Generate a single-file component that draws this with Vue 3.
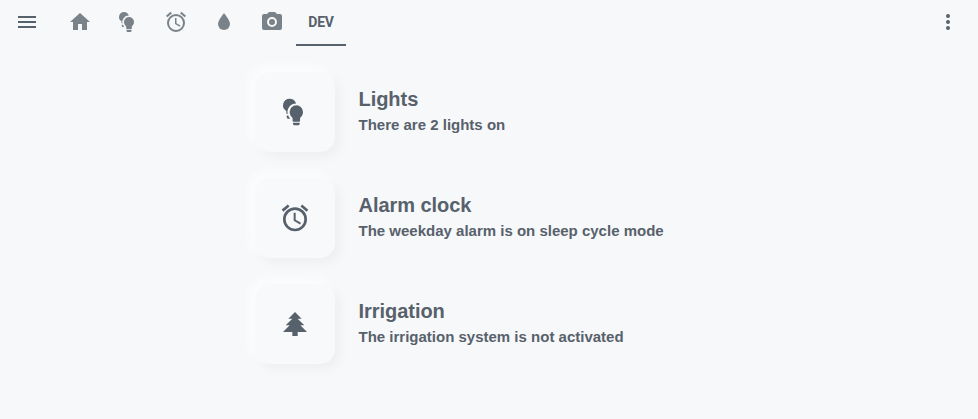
<script setup>
const icons = {
  menu: 'M3,6H21V8H3V6M3,11H21V13H3V11M3,16H21V18H3V16Z',
  home: 'M10,20V14H14V20H19V12H22L12,3L2,12H5V20H10Z',
  bulbs: 'M8,2A5,5 0 0,1 12.8,5.6A6.5,6.5 0 0,0 6.5,13.5H6.2A.7,.7 0 0,1 5.5,12.8V11.3A5,5 0 0,1 8,2M5.8,14.7H6.9Q7.4,15.8 8.2,16.7V17H6.8A1,1 0 0,1 5.8,16V14.7M13,7A5,5 0 0,1 18,12C18,14 17,15.4 15.8,16.5V18.5A.8,.8 0 0,1 15,19.3H11A.8,.8 0 0,1 10.2,18.5V16.5C9,15.4 8,14 8,12A5,5 0 0,1 13,7M10.5,20H15.5V20.8A1.2,1.2 0 0,1 14.3,22H11.7A1.2,1.2 0 0,1 10.5,20.8V20Z',
  alarm: 'M12,20A7,7 0 0,1 5,13A7,7 0 0,1 12,6A7,7 0 0,1 19,13A7,7 0 0,1 12,20M12,4A9,9 0 0,0 3,13A9,9 0 0,0 12,22A9,9 0 0,0 21,13A9,9 0 0,0 12,4M12.5,8H11V14L15.75,16.85L16.5,15.62L12.5,13.25V8M7.88,3.39L6.6,1.86L2,5.71L3.29,7.24L7.88,3.39M22,5.72L17.4,1.86L16.11,3.39L20.71,7.25L22,5.72Z',
  water: 'M12,20A6,6 0 0,1 6,14C6,10 12,3.25 12,3.25C12,3.25 18,10 18,14A6,6 0 0,1 12,20Z',
  camera: 'M4,4H7L9,2H15L17,4H20A2,2 0 0,1 22,6V18A2,2 0 0,1 20,20H4A2,2 0 0,1 2,18V6A2,2 0 0,1 4,4M12,7A5,5 0 0,0 7,12A5,5 0 0,0 12,17A5,5 0 0,0 17,12A5,5 0 0,0 12,7M12,9A3,3 0 0,1 15,12A3,3 0 0,1 12,15A3,3 0 0,1 9,12A3,3 0 0,1 12,9Z',
  dots: 'M12,16A2,2 0 0,1 14,18A2,2 0 0,1 12,20A2,2 0 0,1 10,18A2,2 0 0,1 12,16M12,10A2,2 0 0,1 14,12A2,2 0 0,1 12,14A2,2 0 0,1 10,12A2,2 0 0,1 12,10M12,4A2,2 0 0,1 14,6A2,2 0 0,1 12,8A2,2 0 0,1 10,6A2,2 0 0,1 12,4Z',
  tree: 'M10,21V18H3L8,13H5L10,8H7L12,3L17,8H14L19,13H16L21,18H14V21H10Z'
}
const tabs = ['home', 'bulbs', 'alarm', 'water', 'camera']
const rows = [
  { icon: 'bulbs', title: 'Lights', text: 'There are 2 lights on' },
  { icon: 'alarm', title: 'Alarm clock', text: 'The weekday alarm is on sleep cycle mode' },
  { icon: 'tree', title: 'Irrigation', text: 'The irrigation system is not activated' }
]
</script>

<template>
  <div class="page">
    <header class="bar">
      <svg class="icon" viewBox="0 0 24 24"><path :d="icons.menu" /></svg>
      <nav class="tabs">
        <a v-for="t in tabs" :key="t" class="tab">
          <svg class="icon" viewBox="0 0 24 24"><path :d="icons[t]" /></svg>
        </a>
        <a class="tab active">DEV</a>
      </nav>
      <svg class="icon" viewBox="0 0 24 24"><path :d="icons.dots" /></svg>
    </header>
    <main class="list">
      <section v-for="r in rows" :key="r.title" class="row">
        <div class="tile">
          <svg class="icon large" viewBox="0 0 24 24"><path :d="icons[r.icon]" /></svg>
        </div>
        <div class="info">
          <h2>{{ r.title }}</h2>
          <p>{{ r.text }}</p>
        </div>
      </section>
    </main>
  </div>
</template>

<style>
body { background: #f7f8fa; }
</style>

<style scoped>
.page {
  height: 419px;
  overflow: hidden;
  background: #f7f8fa;
  color: #57616b;
  font-family: "Liberation Sans", Arial, sans-serif;
}
.bar {
  display: flex;
  align-items: center;
  box-sizing: border-box;
  height: 46px;
  padding: 0 18px 0 15px;
}
.icon { display: block; width: 24px; height: 24px; fill: currentColor; margin-bottom: 2px; }
.tabs { display: flex; flex: 1; margin-left: 17px; height: 46px; }
.tab {
  display: flex;
  align-items: center;
  justify-content: center;
  width: 48px;
  color: #7a8289;
}
.tab.active {
  box-sizing: border-box;
  width: 50px;
  border-bottom: 2px solid #57616b;
  color: #57616b;
  font: 700 14px/44px Roboto, sans-serif;
  letter-spacing: -0.2px;
}
.list { display: flex; flex-direction: column; gap: 26px; padding: 26px 0 0 255px; }
.row { display: flex; gap: 23.5px; }
.tile {
  display: flex;
  align-items: center;
  justify-content: center;
  width: 80px;
  height: 80px;
  border-radius: 15px;
  background: #f8f9fa;
  box-shadow: -5px -5px 10px #fcfdfd, 5px 5px 10px #eeeff1;
}
.large { width: 32px; height: 32px; margin: 0; }
.info { padding-top: 15px; }
h2 { margin: 0; font-size: 20px; line-height: 24px; letter-spacing: -0.04px; }
p { margin: 5px 0 0; font-size: 15px; line-height: 18px; font-weight: 700; }
</style>
